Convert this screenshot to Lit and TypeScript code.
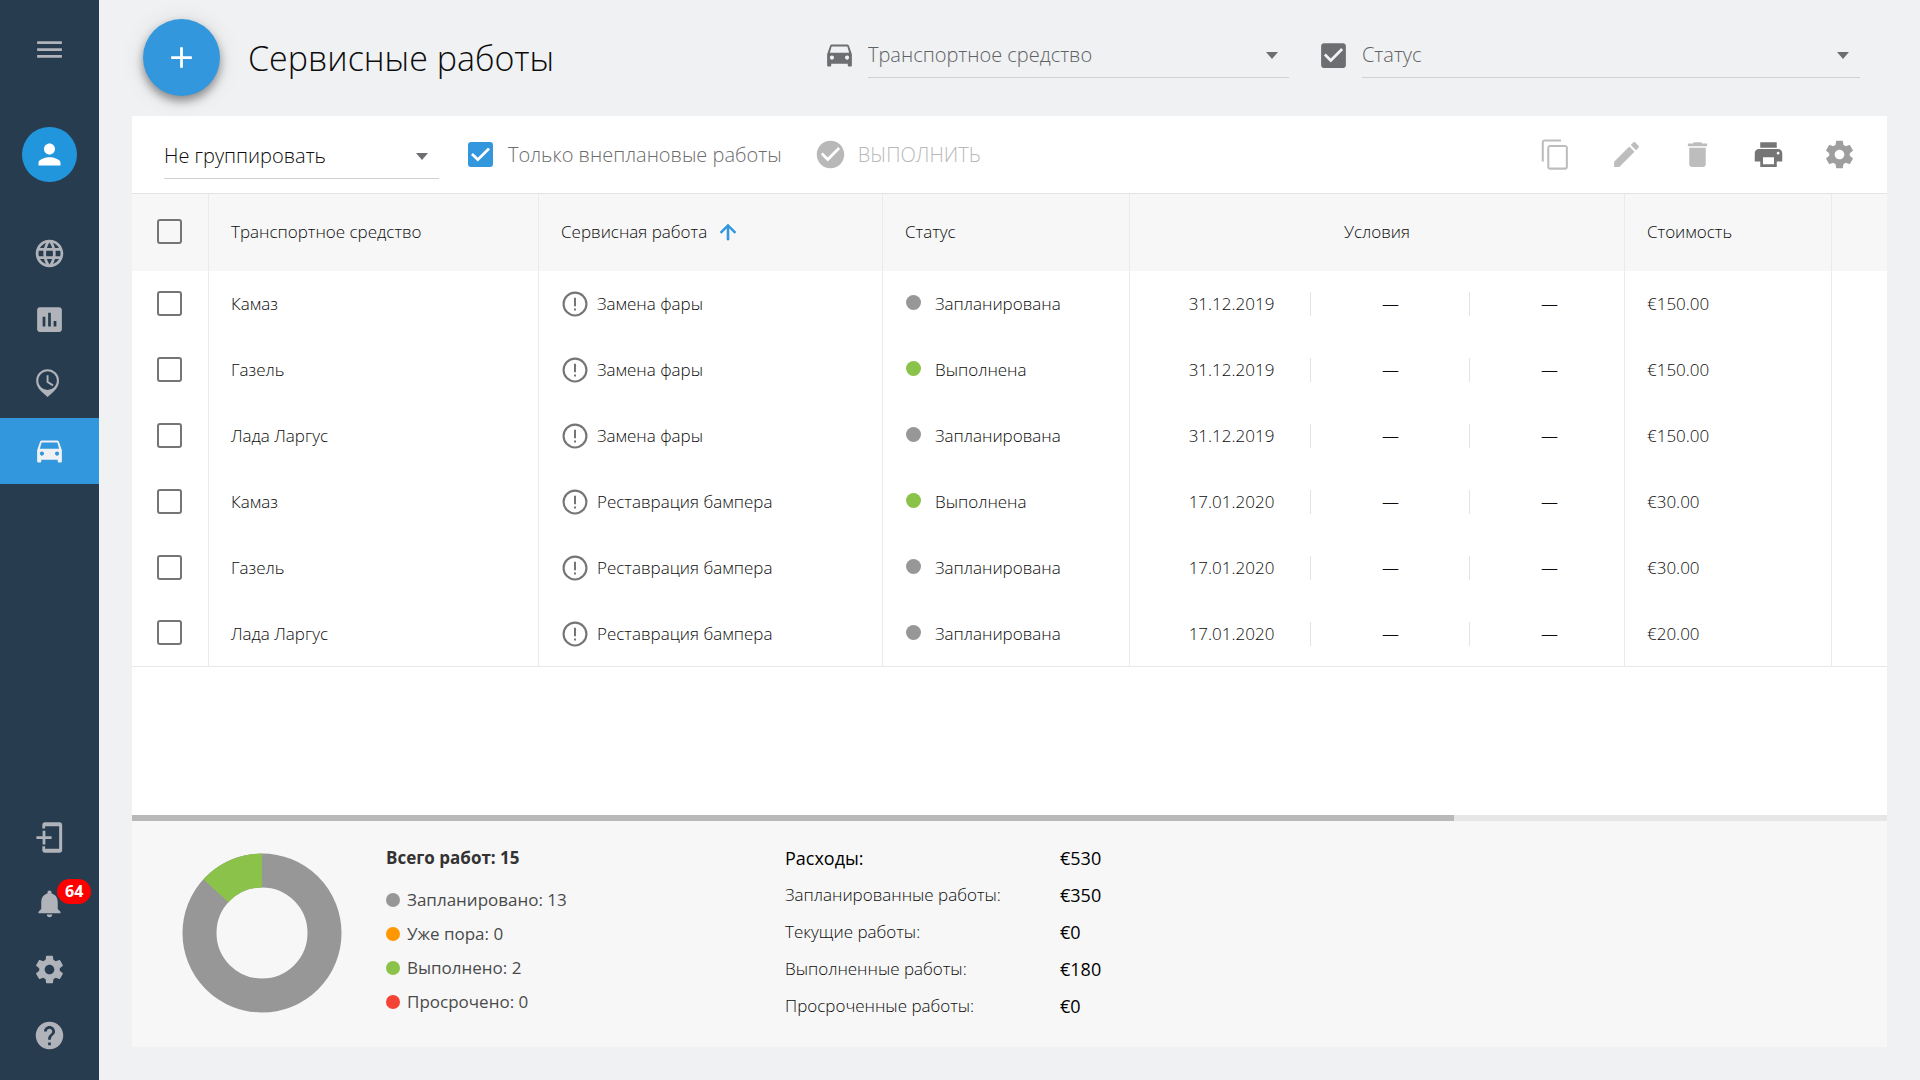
import { LitElement, html, css, svg, nothing } from "lit";
import { customElement, property } from "lit/decorators.js";
import { classMap } from "lit/directives/class-map.js";

const ICONS: Record<string, unknown> = {
  menu: svg`<path d="M3 18h18v-2H3v2zm0-5h18v-2H3v2zm0-7v2h18V6H3z"/>`,
  person: svg`<path d="M12 12c2.21 0 4-1.79 4-4s-1.79-4-4-4-4 1.79-4 4 1.79 4 4 4zm0 2c-2.67 0-8 1.34-8 4v2h16v-2c0-2.66-5.33-4-8-4z"/>`,
  globe: svg`<path d="M11.99 2C6.47 2 2 6.48 2 12s4.47 10 9.99 10C17.52 22 22 17.52 22 12S17.52 2 11.99 2zm6.93 6h-2.95c-.32-1.25-.78-2.45-1.38-3.56 1.84.63 3.37 1.91 4.33 3.56zM12 4.04c.83 1.2 1.48 2.53 1.91 3.96h-3.82c.43-1.43 1.08-2.76 1.91-3.96zM4.26 14C4.1 13.36 4 12.69 4 12s.1-1.36.26-2h3.38c-.08.66-.14 1.32-.14 2s.06 1.34.14 2H4.26zm.82 2h2.95c.32 1.25.78 2.45 1.38 3.56-1.84-.63-3.37-1.9-4.33-3.56zm2.95-8H5.08c.96-1.66 2.49-2.93 4.33-3.56C8.81 5.55 8.35 6.75 8.03 8zM12 19.96c-.83-1.2-1.48-2.53-1.91-3.96h3.82c-.43 1.43-1.08 2.76-1.91 3.96zM14.34 14H9.66c-.09-.66-.16-1.32-.16-2s.07-1.35.16-2h4.68c.09.65.16 1.32.16 2s-.07 1.34-.16 2zm.25 5.56c.6-1.11 1.06-2.31 1.38-3.56h2.95c-.96 1.65-2.49 2.93-4.33 3.56zM16.36 14c.08-.66.14-1.32.14-2s-.06-1.34-.14-2h3.38c.16.64.26 1.31.26 2s-.1 1.36-.26 2h-3.38z"/>`,
  chart: svg`<path d="M19 3H5c-1.1 0-2 .9-2 2v14c0 1.1.9 2 2 2h14c1.1 0 2-.9 2-2V5c0-1.1-.9-2-2-2zM9 17H7v-7h2v7zm4 0h-2V7h2v10zm4 0h-2v-4h2v4z"/>`,
  pinClock: svg`<path fill-rule="evenodd" d="M10.6 .2a8.300 8.300 0 0 0-8.300 8.300c0 3.600 2.100 6.400 4.600 8.500l3.700 3.300 3.700-3.300c2.500-2.100 4.600-4.900 4.600-8.500A8.300 8.300 0 0 0 10.600.2zm0 1.500a6.800 6.800 0 1 1 0 13.600 6.800 6.800 0 0 1 0-13.600z"/><path d="M9.900 4.500h1.400v4.600l3.600 2.200-.7 1.200-4.300-2.600z"/>`,
  car: svg`<path d="M18.92 5.010C18.720 4.420 18.160 4 17.500 4h-11c-.66 0-1.210.42-1.420 1.010L3 11v8c0 .55.45 1 1 1h1c.55 0 1-.45 1-1v-1h12v1c0 .55.45 1 1 1h1c.55 0 1-.45 1-1v-8l-2.080-5.990zM6.500 15c-.83 0-1.500-.67-1.500-1.500S5.670 12 6.500 12s1.500.67 1.500 1.500S7.330 15 6.500 15zm11 0c-.83 0-1.500-.67-1.500-1.500s.67-1.500 1.500-1.500 1.500.67 1.500 1.500-.67 1.500-1.500 1.500zM5 10l1.270-4.500h11.460L19 10H5z"/>`,
  device: svg`<path d="M7 .9h12.400C20.500.9 21.200 1.600 21.200 2.700v18.600c0 1.100-.7 1.800-1.800 1.800H8.600c-1.100 0-1.800-.7-1.800-1.800v-2.900h2v1.700h10.200V3.900H8.800v1.500h-2V2.700C6.800 1.600 7.500.9 8.600.9z"/><path d="M7 7h2v4h4.500v2H9v4H7v-4H2.500v-2H7z"/>`,
  bell: svg`<path d="M12 22c1.100 0 2-.9 2-2h-4c0 1.100.89 2 2 2zm6-6v-5c0-3.070-1.640-5.640-4.500-6.320V4c0-.83-.67-1.500-1.500-1.500s-1.500.67-1.500 1.500v.68C7.630 5.360 6 7.920 6 11v5l-2 2v1h16v-1l-2-2z"/>`,
  gear: svg`<path d="M19.430 12.980c.04-.32.07-.64.07-.98s-.03-.66-.07-.98l2.110-1.650c.19-.15.24-.42.12-.64l-2-3.460c-.12-.22-.39-.3-.61-.22l-2.490 1c-.52-.4-1.080-.73-1.690-.98l-.38-2.650C14.460 2.180 14.250 2 14 2h-4c-.25 0-.46.18-.49.42l-.38 2.650c-.61.25-1.170.59-1.690.98l-2.490-1c-.23-.09-.49 0-.61.22l-2 3.460c-.13.22-.07.49.12.64l2.110 1.650c-.04.32-.07.65-.07.98s.03.66.07.98l-2.110 1.650c-.19.15-.24.42-.12.64l2 3.460c.12.22.39.3.61.22l2.490-1c.52.4 1.080.73 1.690.98l.38 2.650c.03.24.24.42.49.42h4c.25 0 .46-.18.49-.42l.38-2.650c.61-.25 1.170-.59 1.690-.98l2.490 1c.23.09.49 0 .61-.22l2-3.460c.12-.22.07-.49-.12-.64l-2.110-1.650zM12 15.500c-1.930 0-3.500-1.570-3.500-3.500s1.570-3.500 3.500-3.500 3.500 1.570 3.500 3.500-1.570 3.500-3.500 3.500z"/>`,
  help: svg`<path d="M12 2C6.480 2 2 6.480 2 12s4.480 10 10 10 10-4.480 10-10S17.520 2 12 2zm1 17h-2v-2h2v2zm2.070-7.750l-.9.92C13.450 12.900 13 13.500 13 15h-2v-.5c0-1.100.45-2.100 1.170-2.830l1.240-1.260c.37-.36.59-.86.59-1.410 0-1.100-.9-2-2-2s-2 .9-2 2H8c0-2.210 1.790-4 4-4s4 1.790 4 4c0 .88-.36 1.680-.93 2.250z"/>`,
  plus: svg`<path d="M19.500 13h-6.500v6.500h-2V13H4.500v-2H11V4.500h2V11h6.500z"/>`,
  checkBox: svg`<path d="M19 3H5c-1.110 0-2 .9-2 2v14c0 1.100.89 2 2 2h14c1.110 0 2-.9 2-2V5c0-1.100-.89-2-2-2zm-9 14l-5-5 1.410-1.410L10 14.170l7.590-7.590L19 8l-9 9z"/>`,
  checkCircle: svg`<path d="M12 2C6.480 2 2 6.480 2 12s4.480 10 10 10 10-4.480 10-10S17.520 2 12 2zm-2 15l-5-5 1.410-1.410L10 14.170l7.590-7.590L19 8l-9 9z"/>`,
  copy: svg`<path d="M16 1H4c-1.100 0-2 .9-2 2v14h1.500V2.500H16V1zm3 4H8c-1.100 0-2 .9-2 2v14c0 1.100.9 2 2 2h11c1.100 0 2-.9 2-2V7c0-1.100-.9-2-2-2zm.5 16.500h-12v-15h12v15z"/>`,
  edit: svg`<path d="M3 17.250V21h3.750L17.810 9.940l-3.750-3.750L3 17.250zM20.710 7.040c.39-.39.39-1.020 0-1.410l-2.340-2.340c-.39-.39-1.020-.39-1.410 0l-1.830 1.830 3.750 3.750 1.830-1.830z"/>`,
  trash: svg`<path d="M6 19c0 1.100.9 2 2 2h8c1.100 0 2-.9 2-2V7H6v12zM19 4h-3.500l-1-1h-5l-1 1H5v2h14V4z"/>`,
  print: svg`<path d="M19 8H5c-1.660 0-3 1.340-3 3v6h4v4h12v-4h4v-6c0-1.660-1.340-3-3-3zm-3 11H8v-5h8v5zm3-7c-.55 0-1-.45-1-1s.45-1 1-1 1 .45 1 1-.45 1-1 1zm-1-9H6v4h12V3z"/>`,
  arrowUp: svg`<path d="M4 12l1.410 1.410L11 7.830V20h2V7.830l5.580 5.590L20 12l-8-8-8 8z" stroke="currentColor" stroke-width=".6"/>`,
  alert: svg`<path d="M11.200 15.500h1.600v1.700h-1.600zm0-8.500h1.600v6.800h-1.600zM12 2C6.470 2 2 6.500 2 12a10 10 0 1 0 10-10zm0 18.300a8.300 8.300 0 1 1 0-16.600 8.300 8.300 0 0 1 0 16.600z"/>`,
};

@customElement("ui-icon")
class UiIcon extends LitElement {
  static styles = css`
    :host { display: inline-flex; flex: none; width: 33px; height: 33px; }
    .glyph { width: 100%; height: 100%; fill: currentColor; display: block; }
  `;
  @property() name = "";
  render() {
    return html`<svg class="glyph" viewBox="0 0 24 24" aria-hidden="true">${ICONS[this.name] ?? nothing}</svg>`;
  }
}

@customElement("app-sidebar")
class AppSidebar extends LitElement {
  static styles = css`
    :host { display: flex; flex-direction: column; flex: none; width: 99px; background: #283c4f; color: #b0b3b9; }
    button { border: 0; padding: 0; background: none; color: inherit; font: inherit; cursor: pointer; }
    .menu { height: 99px; display: grid; place-items: center; }
    .user { height: 110px; display: grid; place-items: center; }
    .avatar { display: grid; place-items: center; width: 55px; height: 55px; border-radius: 50%; background: #2196dd; color: #fff; }
    .nav { display: flex; flex-direction: column; padding-top: 11px; }
    .bottom { margin-top: auto; padding: 0 0 12px; }
    .item { position: relative; height: 66px; display: grid; place-items: center; color: inherit; }
    .active { background: #3397dd; color: #f0f1f4; }
    .badge {
      position: absolute; left: 57px; top: 9px; padding: 0 8px; border-radius: 13px;
      background: #f00; color: #fff; font-size: 16px; line-height: 25px; font-weight: 700;
    }
  `;
  private item(icon: string, label: string, active = false, badge?: number) {
    return html`<a href="#" class=${classMap({ item: true, active })} aria-label=${label}>
      <ui-icon name=${icon}></ui-icon>
      ${badge ? html`<span class="badge">${badge}</span>` : nothing}
    </a>`;
  }
  render() {
    return html`
      <button class="menu" aria-label="Меню"><ui-icon name="menu"></ui-icon></button>
      <div class="user"><button class="avatar" aria-label="Профиль"><ui-icon name="person"></ui-icon></button></div>
      <nav class="nav">
        ${this.item("globe", "Карта")}
        ${this.item("chart", "Отчёты")}
        ${this.item("pinClock", "История")}
        ${this.item("car", "Автопарк", true)}
      </nav>
      <nav class="nav bottom">
        ${this.item("device", "Приложение")}
        ${this.item("bell", "Уведомления", false, 64)}
        ${this.item("gear", "Настройки")}
        ${this.item("help", "Помощь")}
      </nav>
    `;
  }
}

interface Work { vehicle: string; work: string; done: boolean; date: string; cost: string; }

const WORKS: Work[] = [
  { vehicle: "Камаз", work: "Замена фары", done: false, date: "31.12.2019", cost: "€150.00" },
  { vehicle: "Газель", work: "Замена фары", done: true, date: "31.12.2019", cost: "€150.00" },
  { vehicle: "Лада Ларгус", work: "Замена фары", done: false, date: "31.12.2019", cost: "€150.00" },
  { vehicle: "Камаз", work: "Реставрация бампера", done: true, date: "17.01.2020", cost: "€30.00" },
  { vehicle: "Газель", work: "Реставрация бампера", done: false, date: "17.01.2020", cost: "€30.00" },
  { vehicle: "Лада Ларгус", work: "Реставрация бампера", done: false, date: "17.01.2020", cost: "€20.00" },
];

const LEGEND = [
  { label: "Запланировано", count: 13, tone: "grey" },
  { label: "Уже пора", count: 0, tone: "orange" },
  { label: "Выполнено", count: 2, tone: "green" },
  { label: "Просрочено", count: 0, tone: "red" },
];

const COSTS = [
  { label: "Запланированные работы:", value: "€350" },
  { label: "Текущие работы:", value: "€0" },
  { label: "Выполненные работы:", value: "€180" },
  { label: "Просроченные работы:", value: "€0" },
];

@customElement("app-root")
class AppRoot extends LitElement {
  static styles = css`
    :host {
      display: flex; min-height: 100vh; background: #f0f1f3; color: #0c0c0c;
      font: 300 17px/24px "Open Sans", "Noto Sans", sans-serif;
    }
    button, input, select { font: inherit; color: inherit; margin: 0; }
    button { border: 0; padding: 0; background: none; cursor: pointer; }
    .main { flex: 1; min-width: 0; display: flex; flex-direction: column; padding: 0 33px 33px; }

    .top { display: flex; align-items: center; height: 116px; box-sizing: border-box; padding: 0 27px 1px 11px; }
    .fab {
      flex: none; display: grid; place-items: center; width: 77px; height: 77px; border-radius: 50%;
      background: #3397dd; color: #fff; box-shadow: 0 5px 10px rgba(0, 0, 0, .4), 0 2px 24px rgba(0, 0, 0, .1);
    }
    .title { margin: 0 0 0 28px; font-size: 34px; line-height: 48px; font-weight: 300; white-space: nowrap; }
    .filters {
      flex: none; margin-left: auto; width: 60.4%; padding-bottom: 4px;
      display: grid; grid-template-columns: 466fr 543fr; gap: 28px; color: #6d6e71;
    }
    .filter { display: flex; align-items: center; gap: 12px; }
    .field { position: relative; flex: 1; display: flex; border-bottom: 1px solid #d0d1d4; }
    .field::after {
      content: ""; position: absolute; right: 11px; top: 19px; pointer-events: none;
      border: 6px solid transparent; border-top: 7px solid #6d6e71; border-bottom: 0;
    }
    .select {
      appearance: none; width: 100%; height: 44px; padding: 0; border: 0; background: none; outline: 0;
      font-size: 20px; line-height: 28px;
    }
    .filters .select { color: #606164; }

    .panel { flex: 1; display: flex; flex-direction: column; background: #fff; }
    .tools { display: flex; align-items: center; height: 77px; padding: 0 31px 0 32px; border-bottom: 1px solid #e2e3e4; }
    .group { flex: 0 0 275px; margin-top: 3px; }
    .check { display: flex; align-items: center; gap: 15px; margin-left: 29px; font-size: 20px; color: #6d6d6d; }
    .box {
      appearance: none; display: grid; place-items: center; flex: none; box-sizing: border-box;
      width: 25px; height: 25px; border: 2px solid #757575; border-radius: 3px; background: none;
    }
    .box:checked { background: #3397dd; border-color: #3397dd; }
    .box:checked::before {
      content: ""; width: 19px; height: 14px; background: #fff;
      clip-path: polygon(0 53%, 10% 39%, 36% 73%, 90% 0, 100% 14%, 36% 100%);
    }
    .run { display: flex; align-items: center; gap: 11px; margin-left: 32px; color: #b8b8b8; font-size: 20px; }
    .actions { display: flex; gap: 38px; margin-left: auto; color: #bdbdbd; }
    .actions ui-icon { display: flex; }
    .dark { color: #757575; }
    .mid { color: #9e9e9e; }

    .table { width: 100%; table-layout: fixed; border-collapse: separate; border-spacing: 0; }
    th, td { height: 66px; padding: 0 0 0 22px; text-align: left; font-weight: 300; box-sizing: border-box; border-right: 1px solid #ebebeb; white-space: nowrap; }
    th:last-child, td:last-child { border-right: 0; }
    th { height: 77px; padding-bottom: 2px; background: #f7f7f7; }
    tbody tr:last-child td { border-bottom: 1px solid #e8e8e8; }
    .c-pick { width: 77px; }
    .c-vehicle { width: 330px; }
    .c-work { width: 344px; }
    .c-status { width: 247px; }
    .c-terms { width: 495px; }
    .c-cost { width: 207px; }
    .pick { padding: 0 0 2px 25px; }
    .center { text-align: center; padding-left: 0; }
    .sort, .work, .status { display: flex; align-items: center; }
    .sort { gap: 9px; font-weight: 300; }
    .sort ui-icon { width: 24px; height: 24px; color: #3397dd; }
    .work { gap: 7px; }
    .work ui-icon { width: 30px; height: 30px; margin-left: -1px; color: #757575; }
    .status { gap: 14px; }
    .status .dot { margin: 0 0 3px 1px; }
    .dot { flex: none; width: 15px; height: 15px; border-radius: 50%; }
    .grey { background: #979797; }
    .orange { background: #ff9800; }
    .green { background: #8bc34a; }
    .red { background: #f44336; }
    .terms { display: grid; grid-template-columns: repeat(3, 159px); text-align: center; }
    .term + .term { border-left: 1px solid #e2e3e4; margin-left: -1px; }

    .scroll { margin-top: auto; height: 6px; background: #e6e6e6; }
    .thumb { height: 100%; background: #b9b9b9; }
    .summary { display: flex; align-items: flex-start; height: 226px; padding: 0 50px; box-sizing: border-box; background: #f7f7f7; }
    .donut { flex: none; width: 160px; height: 160px; margin-top: 32px; }
    .legend { width: 399px; margin-left: 44px; padding-top: 24px; color: #4a4a4a; font-weight: 400; }
    .legend-title { margin: 0 0 16px; font-size: 17px; line-height: 26px; font-weight: 700; color: #333; }
    .list { margin: 0; padding: 0; list-style: none; display: grid; gap: 8px; }
    .entry { display: flex; align-items: center; gap: 7px; line-height: 26px; }
    .entry .dot { width: 14px; height: 14px; }
    .costs { display: grid; grid-template-columns: 275px auto; row-gap: 11px; margin: 0; padding-top: 24px; line-height: 26px; }
    .costs dd { margin: 0; font-size: 18px; font-weight: 500; color: #000; }
    .costs .total { font-size: 18px; font-weight: 500; color: #000; }
  `;

  private donut() {
    const r = 62.5;
    const length = 2 * Math.PI * r;
    const share = (2 / 15) * length;
    return html`<svg class="donut" viewBox="0 0 160 160" role="img" aria-label="Всего работ: 15">
      <g fill="none" stroke-width="34" transform="rotate(-90 80 80)">
        <circle cx="80" cy="80" r=${r} stroke="#979797"></circle>
        <circle cx="80" cy="80" r=${r} stroke="#8bc34a" stroke-dasharray="${share} ${length}" stroke-dashoffset=${share - length}></circle>
      </g>
    </svg>`;
  }

  private row(w: Work) {
    return html`<tr>
      <td class="pick"><input class="box" type="checkbox" aria-label=${`${w.vehicle}: ${w.work}`} /></td>
      <td>${w.vehicle}</td>
      <td><div class="work"><ui-icon name="alert"></ui-icon>${w.work}</div></td>
      <td><div class="status"><span class=${classMap({ dot: true, green: w.done, grey: !w.done })}></span>${w.done ? "Выполнена" : "Запланирована"}</div></td>
      <td>
        <div class="terms"><span class="term">${w.date}</span><span class="term">—</span><span class="term">—</span></div>
      </td>
      <td>${w.cost}</td>
      <td></td>
    </tr>`;
  }

  render() {
    return html`
      <app-sidebar></app-sidebar>
      <main class="main">
        <header class="top">
          <button class="fab" aria-label="Добавить"><ui-icon name="plus"></ui-icon></button>
          <h1 class="title">Сервисные работы</h1>
          <div class="filters">
            <div class="filter">
              <ui-icon name="car"></ui-icon>
              <div class="field"><select class="select" aria-label="Транспортное средство"><option>Транспортное средство</option></select></div>
            </div>
            <div class="filter">
              <ui-icon name="checkBox"></ui-icon>
              <div class="field"><select class="select" aria-label="Статус"><option>Статус</option></select></div>
            </div>
          </div>
        </header>
        <section class="panel">
          <div class="tools">
            <div class="field group"><select class="select" aria-label="Группировка"><option>Не группировать</option></select></div>
            <label class="check"><input class="box" type="checkbox" checked />Только внеплановые работы</label>
            <button class="run"><ui-icon name="checkCircle"></ui-icon>ВЫПОЛНИТЬ</button>
            <div class="actions">
              <button aria-label="Копировать"><ui-icon name="copy"></ui-icon></button>
              <button aria-label="Изменить"><ui-icon name="edit"></ui-icon></button>
              <button aria-label="Удалить"><ui-icon name="trash"></ui-icon></button>
              <button class="dark" aria-label="Печать"><ui-icon name="print"></ui-icon></button>
              <button class="mid" aria-label="Настройки таблицы"><ui-icon name="gear"></ui-icon></button>
            </div>
          </div>
          <table class="table">
            <colgroup>
              <col class="c-pick" /><col class="c-vehicle" /><col class="c-work" /><col class="c-status" />
              <col class="c-terms" /><col class="c-cost" /><col />
            </colgroup>
            <thead>
              <tr>
                <th class="pick"><input class="box" type="checkbox" aria-label="Выбрать все" /></th>
                <th>Транспортное средство</th>
                <th><button class="sort">Сервисная работа<ui-icon name="arrowUp"></ui-icon></button></th>
                <th>Статус</th>
                <th class="center">Условия</th>
                <th>Стоимость</th>
                <th></th>
              </tr>
            </thead>
            <tbody>${WORKS.map((w) => this.row(w))}</tbody>
          </table>
          <div class="scroll"><div class="thumb" style="width: 75.3%"></div></div>
          <footer class="summary">
            ${this.donut()}
            <div class="legend">
              <h2 class="legend-title">Всего работ: 15</h2>
              <ul class="list">
                ${LEGEND.map((l) => html`<li class="entry"><span class="dot ${l.tone}"></span>${l.label}: ${l.count}</li>`)}
              </ul>
            </div>
            <dl class="costs">
              <dt class="total">Расходы:</dt><dd>€530</dd>
              ${COSTS.map((c) => html`<dt>${c.label}</dt><dd>${c.value}</dd>`)}
            </dl>
          </footer>
        </section>
      </main>
    `;
  }
}
